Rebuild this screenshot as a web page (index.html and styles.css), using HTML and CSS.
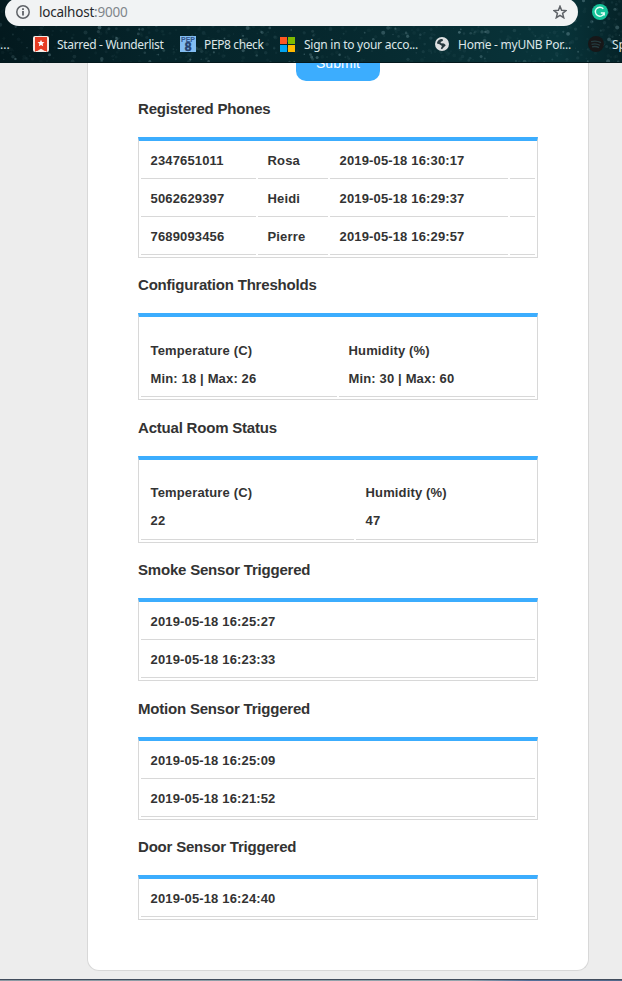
FILE: index.html
```html
<!DOCTYPE html>
<html lang="en">
<head>
<meta charset="utf-8">
<title>localhost:9000</title>
<link rel="stylesheet" href="styles.css">
</head>
<body>
<header class="browser">
  <svg class="stars" width="622" height="63" aria-hidden="true"></svg>
  <div class="toolbar">
    <div class="address">
      <svg class="info" width="14" height="14" viewBox="0 0 14 14"><circle cx="7" cy="7" r="6.2" fill="none" stroke="#5f6368" stroke-width="1.5"/><path d="M7 6v4.500M7 3.300v1.600" stroke="#5f6368" stroke-width="1.8"/></svg>
      <span class="url">localhost<span class="port">:9000</span></span>
      <svg class="star" width="14" height="14" viewBox="0 0 14 14"><path d="M7 1.300l1.600 4 4.400.3-3.400 2.800 1.100 4.300L7 10.300l-3.700 2.400 1.100-4.300L1 5.600l4.400-.3z" fill="none" stroke="#5f6368" stroke-width="1.5"/></svg>
    </div>
    <svg class="grammarly" width="16" height="16" viewBox="0 0 16 16"><circle cx="8" cy="8" r="8" fill="#15c39a"/><path d="M11.300 4.800A4.500 4.500 0 1 0 12.200 9H8.800M12.200 8.500v3" fill="none" stroke="#e9fff8" stroke-width="1.4"/></svg>
  </div>
  <nav class="bookmarks">
    <span class="mark mark-prev">...</span>
    <span class="mark mark-wunder"><svg width="16" height="16" viewBox="0 0 16 16"><rect width="16" height="16" rx="2" fill="#f5e9e3"/><path d="M2 1h12v15l-1-1H3l-1 1z" fill="#e63b22"/><path d="M3.500 15.500L8 12.800l4.500 2.700z" fill="#f7eee8"/><path d="M8 3.800l1 2.200 2.500.2-1.900 1.600.6 2.400L8 8.900l-2.200 1.300.6-2.400-1.900-1.600L7 6z" fill="#fff"/></svg>Starred - Wunderlist</span>
    <span class="mark mark-pep"><svg class="pep" width="16" height="16" viewBox="0 0 16 16"><rect width="16" height="16" fill="#82bdf2"/><text class="pep-word" x="8" y="5.800" text-anchor="middle">PEP</text><text class="pep-num" x="8" y="15" text-anchor="middle">8</text></svg>PEP8 check</span>
    <span class="mark mark-ms"><svg width="15" height="15" viewBox="0 0 15 15"><path d="M0 0h7v7H0z" fill="#ff5722"/><path d="M8 0h7v7H8z" fill="#7fba00"/><path d="M0 8h7v7H0z" fill="#03a5f0"/><path d="M8 8h7v7H8z" fill="#ffb901"/></svg>Sign in to your acco...</span>
    <span class="mark mark-home"><svg width="14" height="14" viewBox="0 0 14 14"><circle cx="7" cy="7" r="7" fill="#dde0e1"/><path d="M2 6.500C2 4 4.500 1.800 7.500 2L8 3.800 5.500 5l.5 1.300 3 .2 1.800 1.700L8.500 10.500 7 12.300 5.800 11.500 7 9 4.500 7.200z" fill="#26383e"/></svg>Home - myUNB Por...</span>
    <span class="mark mark-spot"><svg width="16" height="16" viewBox="0 0 16 16"><circle cx="8" cy="8" r="8" fill="#171718"/><path d="M3 5.600c3.500-1 7-.6 10 1M3.500 8.300c3-.8 6-.4 8.500 1M4 10.800c2.500-.6 5-.3 7 .8" fill="none" stroke="#253c40" stroke-width="1.300"/></svg>Sp</span>
  </nav>
</header>
<main class="page">
  <section class="card">
    <div class="submit-row"><button class="submit">Submit</button></div>
    <h2 class="tall">Registered Phones</h2>
    <table>
      <colgroup><col class="c-phone"><col class="c-name"><col class="c-time"><col class="c-end"></colgroup>
      <tr><td>2347651011</td><td>Rosa</td><td>2019-05-18 16:30:17</td><td></td></tr>
      <tr><td>5062629397</td><td>Heidi</td><td>2019-05-18 16:29:37</td><td></td></tr>
      <tr><td>7689093456</td><td>Pierre</td><td>2019-05-18 16:29:57</td><td></td></tr>
    </table>
    <h2>Configuration Thresholds</h2>
    <table class="readings thresholds">
      <colgroup><col class="c-half"><col class="c-half"></colgroup>
      <tr><td><p>Temperature (C)</p><p>Min: 18 | Max: 26</p></td><td><p>Humidity (%)</p><p>Min: 30 | Max: 60</p></td></tr>
    </table>
    <h2 class="tall">Actual Room Status</h2>
    <table class="readings">
      <colgroup><col class="c-temp"><col class="c-hum"></colgroup>
      <tr><td><p>Temperature (C)</p><p>22</p></td><td><p>Humidity (%)</p><p>47</p></td></tr>
    </table>
    <h2>Smoke Sensor Triggered</h2>
    <table>
      <tr><td>2019-05-18 16:25:27</td></tr>
      <tr><td>2019-05-18 16:23:33</td></tr>
    </table>
    <h2 class="tall">Motion Sensor Triggered</h2>
    <table>
      <tr><td>2019-05-18 16:25:09</td></tr>
      <tr><td>2019-05-18 16:21:52</td></tr>
    </table>
    <h2>Door Sensor Triggered</h2>
    <table>
      <tr><td>2019-05-18 16:24:40</td></tr>
    </table>
  </section>
</main>
<footer class="edge"></footer>
<script src="stars.js"></script>
</body>
</html>
```
FILE: stars.js
```js
// Scatter faint stars over the browser theme with a fixed seed.
const sky = document.querySelector('.stars');
let seed = 41;
const rand = () => (seed = (seed * 16807) % 2147483647) / 2147483647;
for (let i = 0; i < 900; i++) {
  const dot = document.createElementNS('http://www.w3.org/2000/svg', 'circle');
  dot.setAttribute('cx', (rand() * 622).toFixed(1));
  dot.setAttribute('cy', (rand() * 63).toFixed(1));
  dot.setAttribute('r', (0.7 + rand() * 1.3).toFixed(1));
  dot.setAttribute('fill', '#8ab0b8');
  dot.setAttribute('opacity', (0.05 + Math.pow(rand(), 5) * 0.32).toFixed(2));
  sky.appendChild(dot);
}
```
FILE: styles.css
```css
* { box-sizing: border-box; }
body {
  margin: 0;
  height: 981px;
  overflow: hidden;
  display: flex;
  flex-direction: column;
  background: #ededed;
  font-family: "Liberation Sans", Arial, sans-serif;
  color: #333;
}
.browser {
  position: relative;
  flex: none;
  height: 63px;
  background: linear-gradient(90deg, #03191e 0%, #05242a 25%, #06272d 50%, #082f35 75%, #08343a 90%, #052328 100%);
  border-bottom: 1px solid #03181c;
  font-family: "Noto Sans", "Open Sans", sans-serif;
  overflow: hidden;
}
.stars { position: absolute; left: 0; top: 0; }
.toolbar { position: relative; display: flex; height: 26px; padding-left: 5px; }
.address {
  display: flex;
  align-items: center;
  width: 573px;
  height: 28px;
  margin-top: -2px;
  padding: 0 11px;
  border-radius: 14px;
  background: #f1f3f4;
}
.url { margin-left: 9px; font-size: 13.500px; letter-spacing: -.22px; color: #27292c; flex: 1; line-height: 20px; }
.port { color: #80868b; }
.grammarly { margin: 4px 0 0 14px; }
.bookmarks { position: relative; height: 36px; display: flex; font-size: 12px; color: #dce6e8; }
.mark { display: flex; flex: none; align-items: center; white-space: nowrap; }
.mark svg { flex: none; margin-right: 8px; }
.mark-prev { width: 33px; }
.mark-wunder { width: 147px; letter-spacing: -.32px; }
.mark-pep { width: 100px; letter-spacing: -.38px; }
.mark-ms { width: 155px; letter-spacing: -.26px; }
.mark-ms svg { margin-right: 9px; }
.mark-home { width: 153px; letter-spacing: -.24px; }
.mark-home svg { margin-right: 9px; }
.pep { font-family: "Liberation Sans", Arial, sans-serif; font-weight: bold; letter-spacing: 0; }
.pep-word { font-size: 7px; fill: #33558a; }
.pep-num { font-size: 12px; fill: #24416e; stroke: #24416e; stroke-width: .5px; }
.page { flex: none; height: 916px; display: flex; justify-content: center; padding-left: 54px; overflow: hidden; }
.card {
  width: 502px;
  height: 908px;
  padding: 0 50px;
  background: #fff;
  border: 1px solid #d8d8d8;
  border-top: 0;
  border-radius: 0 0 12px 12px;
}
.submit-row { display: flex; height: 18px; padding-left: 158px; }
.submit {
  width: 84px;
  height: 38px;
  margin-top: -20px;
  padding: 2px 0 0;
  border: 0;
  border-radius: 10px;
  background: #3cadfe;
  color: #fff;
  font: 14px/36px "Liberation Sans", Arial, sans-serif;
  letter-spacing: .1px;
}
h2 {
  height: 55px;
  margin: 0;
  padding-top: 17px;
  font-size: 15px;
  line-height: 20px;
  letter-spacing: -.2px;
}
.tall { height: 56px; padding-top: 18px; }
table {
  width: 400px;
  table-layout: fixed;
  border-collapse: separate;
  border-spacing: 2px;
  border: 1px solid #d8d8d8;
  border-top: 4px solid #3cadfe;
}
td {
  height: 36px;
  padding: 0 9.500px;
  border-bottom: 1px solid #d8d8d8;
  font-size: 13px;
  font-weight: bold;
  line-height: 20px;
  letter-spacing: .15px;
}
.c-phone { width: 115px; }
.c-name { width: 70px; }
.c-time { width: 178px; }
.c-end { width: 25px; }
.c-half { width: 196px; }
.c-temp { width: 213px; }
.c-hum { width: 179px; }
.readings td { height: 78px; padding-top: 17px; vertical-align: top; }
.thresholds td { padding-top: 18px; }
p { margin: 0; line-height: 28px; }
.edge { flex: none; height: 2px; border-top: 1px solid #424d5d; background: linear-gradient(90deg, #8c9aa3, #94a6ad 75%, #55719a 85%, #52688a); }
```
